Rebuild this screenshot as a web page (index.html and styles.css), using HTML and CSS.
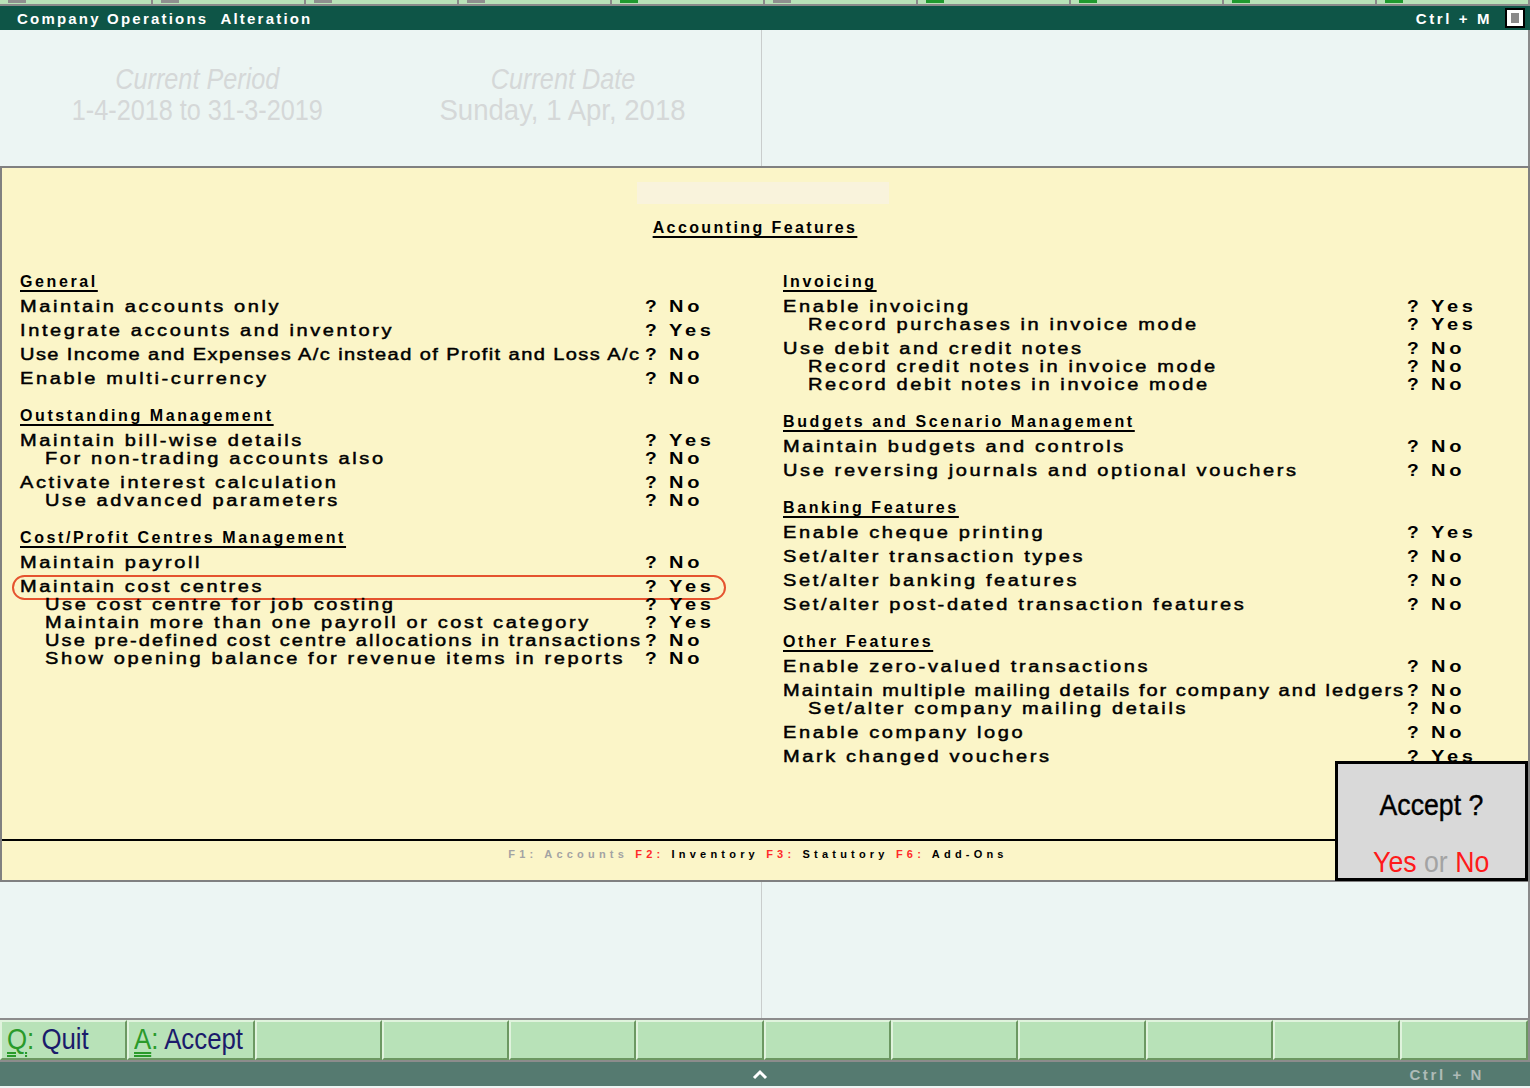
FILE: index.html
```html
<!DOCTYPE html>
<html>
<head>
<meta charset="utf-8">
<title>Company Operations Alteration</title>
<link rel="stylesheet" href="styles.css">
</head>
<body>
<div class="app">
  <div class="tabstrip">
    <span class="tab"><i class="mk"></i></span>
    <span class="tab"><i class="mk"></i></span>
    <span class="tab"><i class="mk"></i></span>
    <span class="tab"><i class="mk"></i></span>
    <span class="tab"><i class="mk g"></i></span>
    <span class="tab"><i class="mk"></i></span>
    <span class="tab"><i class="mk g"></i></span>
    <span class="tab"><i class="mk g"></i></span>
    <span class="tab"><i class="mk g"></i></span>
    <span class="tab"><i class="mk g"></i></span>
  </div>
  <div class="titlebar">
    <span class="title">Company Operations  Alteration</span>
    <span class="shortcut">Ctrl + M</span>
    <span class="winbtn"><i></i></span>
  </div>

  <div class="info">
    <div class="info-left">
      <div class="info-item a">
        <div class="il"><span class="nw">Current Period</span></div>
        <div class="iv"><span class="nw">1-4-2018 to 31-3-2019</span></div>
      </div>
      <div class="info-item b">
        <div class="il"><span class="nw">Current Date</span></div>
        <div class="iv"><span class="nw wide">Sunday, 1 Apr, 2018</span></div>
      </div>
    </div>
  </div>

  <div class="panel">
    <div class="panel-body">
      <div class="faint"></div>
      <div class="ptitle"><span>Accounting Features</span></div>
      <div class="cols">
        <div class="col left">
          <div class="head"><span>General</span></div>
          <div class="row"><span class="lbl">Maintain accounts only</span><span class="q">?</span><span class="v">No</span></div>
          <div class="row"><span class="lbl">Integrate accounts and inventory</span><span class="q">?</span><span class="v">Yes</span></div>
          <div class="row"><span class="lbl fit-a">Use Income and Expenses A/c instead of Profit and Loss A/c</span><span class="q">?</span><span class="v">No</span></div>
          <div class="row"><span class="lbl">Enable multi-currency</span><span class="q">?</span><span class="v">No</span></div>

          <div class="head"><span>Outstanding Management</span></div>
          <div class="row"><span class="lbl">Maintain bill-wise details</span><span class="q">?</span><span class="v">Yes</span></div>
          <div class="row sub"><span class="lbl">For non-trading accounts also</span><span class="q">?</span><span class="v">No</span></div>
          <div class="row"><span class="lbl">Activate interest calculation</span><span class="q">?</span><span class="v">No</span></div>
          <div class="row sub"><span class="lbl">Use advanced parameters</span><span class="q">?</span><span class="v">No</span></div>

          <div class="head"><span>Cost/Profit Centres Management</span></div>
          <div class="row"><span class="lbl">Maintain payroll</span><span class="q">?</span><span class="v">No</span></div>
          <div class="row marked"><span class="lbl">Maintain cost centres</span><span class="q">?</span><span class="v">Yes</span><span class="ring"></span></div>
          <div class="row sub"><span class="lbl">Use cost centre for job costing</span><span class="q">?</span><span class="v">Yes</span></div>
          <div class="row sub"><span class="lbl">Maintain more than one payroll or cost category</span><span class="q">?</span><span class="v">Yes</span></div>
          <div class="row sub"><span class="lbl fit-b">Use pre-defined cost centre allocations in transactions</span><span class="q">?</span><span class="v">No</span></div>
          <div class="row sub"><span class="lbl">Show opening balance for revenue items in reports</span><span class="q">?</span><span class="v">No</span></div>
        </div>

        <div class="col right">
          <div class="head"><span>Invoicing</span></div>
          <div class="row"><span class="lbl">Enable invoicing</span><span class="q">?</span><span class="v">Yes</span></div>
          <div class="row sub"><span class="lbl">Record purchases in invoice mode</span><span class="q">?</span><span class="v">Yes</span></div>
          <div class="row"><span class="lbl">Use debit and credit notes</span><span class="q">?</span><span class="v">No</span></div>
          <div class="row sub"><span class="lbl">Record credit notes in invoice mode</span><span class="q">?</span><span class="v">No</span></div>
          <div class="row sub"><span class="lbl">Record debit notes in invoice mode</span><span class="q">?</span><span class="v">No</span></div>

          <div class="head"><span>Budgets and Scenario Management</span></div>
          <div class="row"><span class="lbl">Maintain budgets and controls</span><span class="q">?</span><span class="v">No</span></div>
          <div class="row"><span class="lbl">Use reversing journals and optional vouchers</span><span class="q">?</span><span class="v">No</span></div>

          <div class="head"><span>Banking Features</span></div>
          <div class="row"><span class="lbl">Enable cheque printing</span><span class="q">?</span><span class="v">Yes</span></div>
          <div class="row"><span class="lbl">Set/alter transaction types</span><span class="q">?</span><span class="v">No</span></div>
          <div class="row"><span class="lbl">Set/alter banking features</span><span class="q">?</span><span class="v">No</span></div>
          <div class="row"><span class="lbl">Set/alter post-dated transaction features</span><span class="q">?</span><span class="v">No</span></div>

          <div class="head"><span>Other Features</span></div>
          <div class="row"><span class="lbl">Enable zero-valued transactions</span><span class="q">?</span><span class="v">No</span></div>
          <div class="row"><span class="lbl fit-c">Maintain multiple mailing details for company and ledgers</span><span class="q">?</span><span class="v">No</span></div>
          <div class="row sub"><span class="lbl">Set/alter company mailing details</span><span class="q">?</span><span class="v">No</span></div>
          <div class="row"><span class="lbl">Enable company logo</span><span class="q">?</span><span class="v">No</span></div>
          <div class="row"><span class="lbl">Mark changed vouchers</span><span class="q">?</span><span class="v">Yes</span></div>
        </div>
      </div>
    </div>
    <div class="fkeys"><span class="fk-dim">F1: Accounts</span> <span class="fk-red">F2:</span> Inventory <span class="fk-red">F3:</span> Statutory <span class="fk-red">F6:</span> Add-Ons</div>

    <div class="accept">
      <div class="acc-q"><span class="nw2">Accept ?</span></div>
      <div class="acc-yn"><span class="nw2"><span class="red">Yes</span> <span class="or">or</span> <span class="red">No</span></span></div>
    </div>
  </div>

  <div class="lower">
    <div class="lower-left"></div>
  </div>

  <div class="buttons">
    <div class="btn"><span class="bt"><span class="key">Q</span><span class="colon">:</span> Quit</span></div>
    <div class="btn"><span class="bt"><span class="key">A</span><span class="colon">:</span> Accept</span></div>
    <div class="btn"></div>
    <div class="btn"></div>
    <div class="btn"></div>
    <div class="btn"></div>
    <div class="btn"></div>
    <div class="btn"></div>
    <div class="btn"></div>
    <div class="btn"></div>
    <div class="btn"></div>
    <div class="btn"></div>
  </div>

  <div class="statusbar">
    <svg class="chev" width="18" height="12" viewBox="0 0 18 12"><polyline points="3,10 9,4 15,10" fill="none" stroke="#ffffff" stroke-width="3"/></svg>
    <span class="ctrl-n">Ctrl + N</span>
  </div>
</div>
</body>
</html>
```

FILE: styles.css
```css
* { box-sizing: border-box; margin: 0; padding: 0; }

html, body {
  width: 1530px;
  height: 1088px;
  overflow: hidden;
  background: #ecf5f3;
}

body {
  font-family: "Liberation Sans", Arial, sans-serif;
  color: #000;
}

.app {
  width: 1530px;
  height: 1088px;
  display: flex;
  flex-direction: column;
  position: relative;
  background: #ecf5f3;
}

/* top tab strip (cut off) */
.tabstrip {
  height: 6px;
  flex: none;
  background: #b8e2b8;
  border-bottom: 2px solid #8a8a8a;
  display: grid;
  grid-template-columns: repeat(10, 153px);
}
.tab {
  border-right: 2px solid #8a8a8a;
  padding-left: 8px;
}
.mk {
  display: block;
  width: 18px;
  height: 3px;
  background: #8f8f8f;
}
.mk.g { background: #1f9a2f; }

/* title bar */
.titlebar {
  height: 24px;
  flex: none;
  background: #0e5547;
  display: flex;
  align-items: center;
  color: #fff;
  padding-left: 17px;
}
.title {
  flex: 1;
  font-weight: bold;
  font-size: 15px;
  letter-spacing: 2.2px;
  white-space: pre;
}
.shortcut {
  font-weight: bold;
  font-size: 15px;
  letter-spacing: 2.6px;
  margin-right: 13px;
}
.winbtn {
  width: 20px;
  height: 20px;
  background: #fff;
  border: 2px solid #000;
  margin-right: 5px;
  display: flex;
  align-items: center;
  justify-content: center;
}
.winbtn i {
  width: 8px;
  height: 10px;
  background: #8a8a8a;
}

/* header info */
.info {
  height: 136px;
  flex: none;
  display: flex;
  border-right: 2px solid #8a8a8a;
}
.info-left {
  width: 762px;
  border-right: 1px solid #c9cdcc;
  display: flex;
  padding-top: 34px;
}
.info-item {
  text-align: center;
  font-size: 29px;
  line-height: 31px;
  color: #d5d8d8;
  white-space: nowrap;
}
.info-item.a { width: 394px; }
.info-item.b { width: 338px; }
.il { font-style: italic; }
.nw {
  display: inline-block;
  transform: scaleX(0.87);
}
.nw.wide { transform: scaleX(0.95); }

/* main yellow panel */
.panel {
  height: 716px;
  flex: none;
  background: #fbf5c8;
  border: 2px solid #808080;
  display: flex;
  flex-direction: column;
  position: relative;
}
.panel-body { flex: 1; }
.faint {
  margin: 14px 0 0 635px;
  width: 252px;
  height: 22px;
  background: #f9f3dc;
}
.ptitle {
  margin-top: 15px;
  height: 18px;
  line-height: 18px;
  text-align: center;
  padding-right: 20px;
  font-weight: bold;
  font-size: 16px;
  letter-spacing: 2.4px;
}
.ptitle span, .head span {
  text-decoration: underline;
  text-decoration-thickness: 2px;
  text-underline-offset: 3px;
}

.cols {
  margin-top: 36px;
  padding-left: 18px;
  display: grid;
  grid-template-columns: 763px 1fr;
}

.head {
  height: 18px;
  line-height: 18px;
  font-weight: bold;
  font-size: 16px;
  letter-spacing: 2.6px;
  margin-top: 19px;
  white-space: nowrap;
}
.col > .head:first-child { margin-top: 0; }

.row {
  height: 18px;
  line-height: 18px;
  display: flex;
  font-size: 16px;
  margin-top: 6px;
  white-space: nowrap;
  position: relative;
}
.head + .row { margin-top: 7px; }
.row.sub { margin-top: 0; padding-left: 25px; }

.lbl {
  width: 625px;
  flex: none;
  letter-spacing: 2.1px;
  transform: scaleX(1.25);
  transform-origin: 0 50%;
  -webkit-text-stroke: 0.45px #000;
}
.row.sub .lbl { width: 600px; }
.right .lbl { width: 624px; }
.right .row.sub .lbl { width: 599px; }

.fit-a { letter-spacing: 1.15px; }
.fit-b { letter-spacing: 1.7px; }
.fit-c { letter-spacing: 1.6px; }

.q {
  width: 24px;
  flex: none;
  font-weight: bold;
  transform: scaleX(1.2);
  transform-origin: 0 50%;
}
.v {
  font-weight: bold;
  letter-spacing: 3px;
  transform: scaleX(1.25);
  transform-origin: 0 50%;
}

.ring {
  position: absolute;
  left: -8px;
  top: -3px;
  width: 714px;
  height: 25px;
  border: 2px solid #e5532f;
  border-radius: 13px;
}

/* function keys row */
.fkeys {
  height: 41px;
  flex: none;
  border-top: 2px solid #000;
  text-align: center;
  font-size: 11px;
  font-weight: bold;
  letter-spacing: 4.2px;
  padding-top: 6px;
  line-height: 14px;
  padding-right: 14px;
  white-space: pre;
}
.fk-dim { color: #a3a3a3; }
.fk-red { color: #ff2a2a; }

/* Accept dialog */
.accept {
  position: absolute;
  right: 0;
  top: 593px;
  width: 193px;
  height: 120px;
  background: #d9d9d9;
  border: 3px solid #000;
  text-align: center;
  font-size: 29px;
  line-height: 32px;
  padding-top: 25px;
  white-space: nowrap;
}
.acc-q { -webkit-text-stroke: 0.4px #000; }
.nw2 {
  display: inline-block;
  transform: scaleX(0.92);
}
.acc-yn { margin-top: 25px; }
.red { color: #ff1a1a; }
.or { color: #a3a3a3; }

/* lower empty area */
.lower {
  height: 136px;
  flex: none;
  display: flex;
  border-right: 2px solid #8a8a8a;
}
.lower-left {
  width: 762px;
  border-right: 1px solid #c9cdcc;
}

/* bottom button bar */
.buttons {
  height: 44px;
  flex: none;
  border-top: 2px solid #8c8c8c;
  border-bottom: 2px solid #8c8c8c;
  background: #8c8c8c;
  display: grid;
  grid-template-columns: repeat(12, 127.3px);
}
.btn {
  background: #b8e2b8;
  border-top: 2px solid #e0f3dd;
  border-left: 2px solid #e0f3dd;
  border-right: 2px solid #6c9862;
  border-bottom: 2px solid #6c9862;
  font-size: 30px;
  line-height: 34px;
  padding-left: 5px;
  color: #1b1b6b;
  white-space: pre;
  overflow: hidden;
}
.bt {
  display: inline-block;
  transform: scaleX(0.86);
  transform-origin: 0 50%;
}
.key {
  color: #2a9a2a;
  text-decoration: underline double;
  text-decoration-thickness: 2px;
  text-underline-offset: 3px;
}
.colon { color: #2a9a2a; }

/* status bar */
.statusbar {
  height: 24px;
  flex: none;
  background: #557a70;
  display: flex;
  align-items: center;
  position: relative;
}
.chev {
  margin-left: 751px;
}
.ctrl-n {
  margin-left: auto;
  margin-right: 46px;
  color: #aebbb7;
  font-weight: bold;
  font-size: 15px;
  letter-spacing: 2.6px;
}
```
